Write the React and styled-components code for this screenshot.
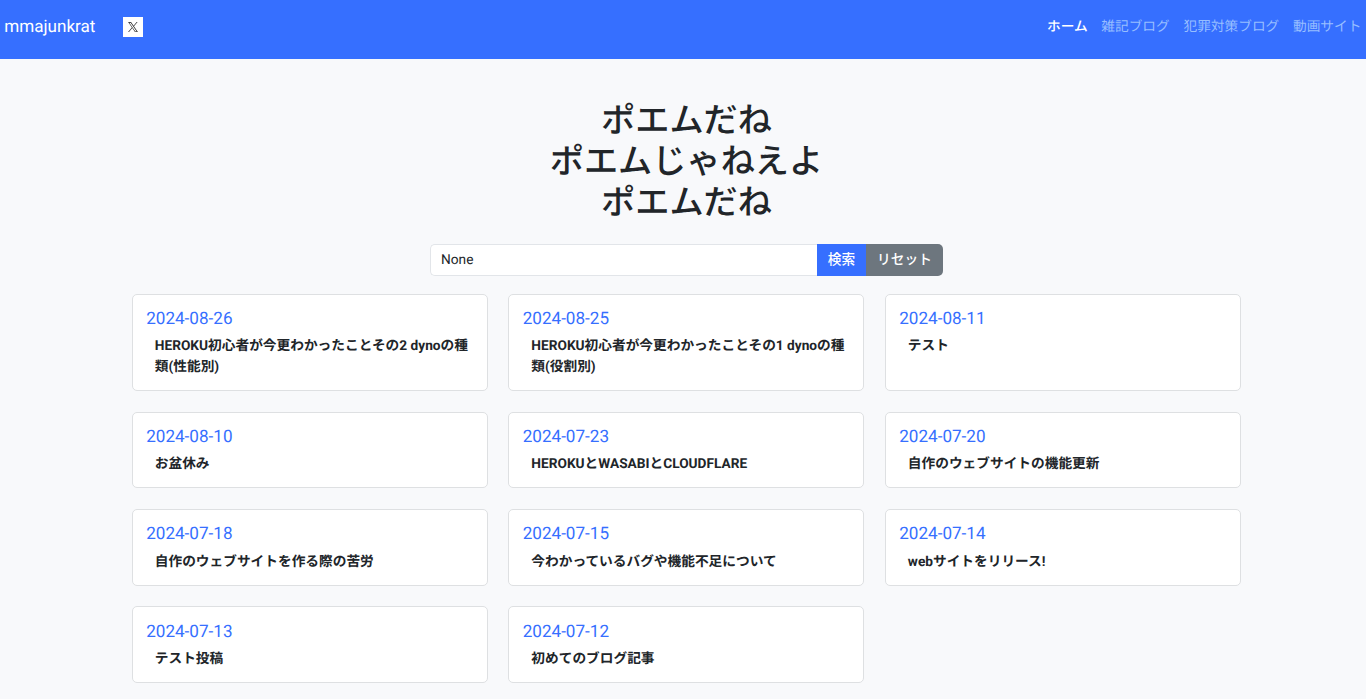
import React from 'react'
import styled, { createGlobalStyle } from 'styled-components'

const GlobalStyle = createGlobalStyle`
  * {
    box-sizing: border-box;
  }
  body {
    margin: 0;
    min-height: 100vh;
    overflow: hidden;
    background: #f8f9fb;
    color: #212529;
    font-family: Roboto, "Noto Sans CJK JP", sans-serif;
    font-size: 13.7px;
    line-height: 20.5px;
    text-rendering: geometricPrecision;
  }
`

const Navbar = styled.header`
  display: flex;
  align-items: flex-start;
  height: 59px;
  padding: 14px 4.6px 0 4.2px;
  background: #366fff;
`

const Brand = styled.a`
  color: #fff;
  font-size: 17.1px;
  line-height: 27px;
  text-decoration: none;
`

const XLink = styled.a`
  display: flex;
  align-items: center;
  justify-content: center;
  width: 20.5px;
  height: 20.5px;
  margin: 2.8px 0 0 27.4px;
  background: #fff;
`

const Nav = styled.nav`
  display: flex;
  gap: 13.7px;
  margin: 2.6px 0 0 auto;
`

const NavLink = styled.a`
  color: ${props => props.$active ? '#fff' : '#97beff'};
  font-weight: ${props => props.$active ? 500 : 400};
  text-decoration: none;
`

const Title = styled.h1`
  margin: 41.5px 0 20.5px;
  padding-left: 7px;
  font-size: 34.2px;
  font-weight: 500;
  line-height: 41px;
  text-align: center;
`

const Search = styled.form`
  display: flex;
  width: 513px;
  height: 32.4px;
  margin: 0 auto 17.2px 430px;
`

const Input = styled.input`
  flex: 1;
  min-width: 0;
  padding: 1px 10px 0;
  border: 1px solid #e2e5e9;
  border-right: 0;
  border-radius: 5px 0 0 5px;
  outline: 0;
  background: #fff;
  color: #212529;
  font: inherit;
  text-rendering: inherit;
`

const Button = styled.button`
  width: ${props => props.$width}px;
  padding: 0 0 2px;
  border: 0;
  border-radius: ${props => props.$last ? '0 5px 5px 0' : 0};
  background: ${props => props.$last ? '#6d767e' : '#366fff'};
  color: #fff;
  font: inherit;
  font-weight: 500;
`

const Grid = styled.main`
  display: grid;
  grid-template-columns: repeat(3, 1fr);
  gap: 20.6px;
  padding: 0 125.2px 0 131.8px;
`

const Card = styled.article`
  padding: 14.2px 13.4px 12.9px;
  border: 1px solid #dee0e2;
  border-radius: 5px;
  background: #fff;
`

const PostDate = styled.a`
  display: block;
  margin-bottom: 6.8px;
  color: #366fff;
  font-size: 17.1px;
  line-height: 20.5px;
  text-decoration: none;
`

const PostTitle = styled.div`
  padding-left: 8.6px;
  font-weight: 700;
`

const links = ['ホーム', '雑記ブログ', '犯罪対策ブログ', '動画サイト']

const posts = [
  { date: '2024-08-26', title: 'HEROKU初心者が今更わかったことその2 dynoの種類(性能別)' },
  { date: '2024-08-25', title: 'HEROKU初心者が今更わかったことその1 dynoの種類(役割別)' },
  { date: '2024-08-11', title: 'テスト' },
  { date: '2024-08-10', title: 'お盆休み' },
  { date: '2024-07-23', title: 'HEROKUとWASABIとCLOUDFLARE' },
  { date: '2024-07-20', title: '自作のウェブサイトの機能更新' },
  { date: '2024-07-18', title: '自作のウェブサイトを作る際の苦労' },
  { date: '2024-07-15', title: '今わかっているバグや機能不足について' },
  { date: '2024-07-14', title: 'webサイトをリリース!' },
  { date: '2024-07-13', title: 'テスト投稿' },
  { date: '2024-07-12', title: '初めてのブログ記事' }
]

export default function App() {
  return (
    <>
      <GlobalStyle />
      <Navbar>
        <Brand href="#">mmajunkrat</Brand>
        <XLink href="#" aria-label="X">
          <svg width="10" height="10" viewBox="0 0 24 24" fill="#222">
            <path d="M14.23 10.16 22.98 0h-2.07l-7.6 8.82L7.24 0H.24l9.18 13.34L.24 24h2.07l8.03-9.32L16.76 24h7zM3.06 1.56h3.18l14.66 20.96h-3.18z" />
          </svg>
        </XLink>
        <Nav>
          {links.map((label, index) =>
            <NavLink href="#" $active={index === 0} key={label}>{label}</NavLink>
          )}
        </Nav>
      </Navbar>

      <Title>
        ポエムだね<br />
        ポエムじゃねえよ<br />
        ポエムだね
      </Title>

      <Search>
        <Input defaultValue="None" />
        <Button type="button" $width={49}>検索</Button>
        <Button type="button" $width={77} $last>リセット</Button>
      </Search>

      <Grid>
        {posts.map(post =>
          <Card key={post.date}>
            <PostDate href="#">{post.date}</PostDate>
            <PostTitle>{post.title}</PostTitle>
          </Card>
        )}
      </Grid>
    </>
  )
}
